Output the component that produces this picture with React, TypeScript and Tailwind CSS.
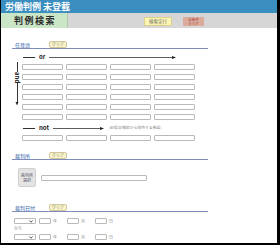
import React from "react";

const jp = "font-['Noto_Sans_CJK_JP','Noto_Sans',sans-serif]";

function Arrow({ width }: { width: number }) {
  return (
    <svg width={width + 3} height="5" viewBox={`0 0 ${width + 3} 5`} className="block">
      <line x1="0" y1="2.5" x2={width} y2="2.5" stroke="#333" strokeWidth="0.8" />
      <path d={`M${width - 1} 1 L${width + 3} 2.5 L${width - 1} 4 Z`} fill="#222" />
    </svg>
  );
}

function Box({ className = "" }: { className?: string }) {
  return <div className={`h-[6px] rounded-[1px] border border-[#b9b9b9] bg-white ${className}`} />;
}

function SectionHead({ title }: { title: string }) {
  return (
    <div className="flex h-[8px] w-[196px] items-center border-b-[1.5px] border-[#7e8cbc] pl-[3px]">
      <span className="w-[34px] text-[5px] leading-none text-[#2f5ea8]">{title}</span>
      <span className="rounded-[2px] border border-[#cfc79a] bg-[#f8f3cc] px-[2px] text-[4px] leading-[5px] text-[#8a845c]">
        クリア
      </span>
    </div>
  );
}

function InputRow() {
  return (
    <div className="flex gap-[3px]">
      <Box className="w-[41px]" />
      <Box className="w-[41px]" />
      <Box className="w-[41px]" />
      <Box className="w-[41px]" />
    </div>
  );
}

function DateRow() {
  return (
    <div className="flex items-center text-[4px] text-[#888]">
      <div className="ml-[2px] flex h-[6px] w-[22px] items-center justify-end rounded-[1px] border border-[#b9b9b9] bg-white pr-[2px]">
        <svg width="4" height="3" viewBox="0 0 4 3">
          <path d="M0.5 0.5 L2 2.3 L3.5 0.5" fill="none" stroke="#333" strokeWidth="0.8" />
        </svg>
      </div>
      <Box className="ml-[3px] w-[12px]" />
      <span className="ml-[2px] mr-[10px]">年</span>
      <Box className="w-[12px]" />
      <span className="ml-[2px] mr-[10px]">月</span>
      <Box className="w-[12px]" />
      <span className="ml-[2px]">日</span>
    </div>
  );
}

export default function App() {
  return (
    <div className={`h-[245px] w-[280px] overflow-hidden border-b-2 border-l border-r-[3px] border-black bg-white ${jp}`}>
      <div className="h-[13px] bg-[#3a8ec0] pl-[4px] text-[9px] font-bold leading-[13px] text-white">
        労働判例 未登載
      </div>
      <div className="flex h-[15px] bg-[#d6d6d6]">
        <div className="w-[67px] border-r border-[#b5c9b0] bg-[#cbe6c6] pl-[13px] text-[9px] font-bold leading-[15px] tracking-[1.5px] text-[#2b2b2b]">
          判例検索
        </div>
        <div className="ml-[76px] mt-[4px] h-[9px] w-[28px] rounded-[1px] border border-[#dcd08a] bg-[#fcf4b4] text-center text-[4.5px] leading-[7px] text-[#666]">
          検索実行
        </div>
        <div className="ml-[11px] mt-[4px] flex h-[9px] w-[21px] flex-col items-center justify-center rounded-[1px] bg-[#dbab9b] text-[3.5px] leading-[3.5px] text-[#a54040]">
          <span>全条件</span>
          <span>クリア</span>
        </div>
      </div>

      <div className="pl-[11px]">
        <div className="mt-[13px]">
          <SectionHead title="任意語" />
        </div>

        <div className="ml-[11px] mt-[5px] flex h-[6px] items-center">
          <div className="h-px w-[12px] bg-[#333]" />
          <span className="mx-[4px] text-[6px] font-bold leading-none text-[#222]">or</span>
          <Arrow width={124} />
        </div>

        <div className="mt-[2px] flex">
          <div className="flex w-[10px] flex-col items-center">
            <div className="h-[10px] w-px bg-[#333]" />
            <span className="py-[1px] text-[6px] font-bold leading-none text-[#222] [writing-mode:vertical-rl]">
              and
            </span>
            <div className="h-[19px] w-px bg-[#333]" />
            <svg width="4" height="4" viewBox="0 0 4 4" className="block">
              <path d="M0.5 0 L2 3.5 L3.5 0 Z" fill="#222" />
            </svg>
          </div>
          <div className="mt-[2px] flex flex-col gap-[4px]">
            <InputRow />
            <InputRow />
            <InputRow />
            <InputRow />
            <InputRow />
            <InputRow />
          </div>
        </div>

        <div className="ml-[11px] mt-[4px] flex h-[8px] items-center">
          <div className="h-px w-[12px] bg-[#333]" />
          <span className="mx-[4px] text-[6px] font-bold leading-none text-[#222]">not</span>
          <Arrow width={48} />
          <span className="ml-[5px] text-[3.8px] leading-none text-[#888]">(and/or検索から除外する単語)</span>
        </div>
        <div className="ml-[10px] mt-[3px]">
          <InputRow />
        </div>

        <div className="mt-[11px]">
          <SectionHead title="裁判所" />
        </div>
        <div className="ml-[6px] mt-[8px] flex items-center">
          <div className="flex h-[19px] w-[18px] flex-col items-center justify-center rounded-[2px] border border-[#cfcfcf] bg-[#e4e4e4] text-[4px] leading-[5px] text-[#556]">
            <span>裁判所</span>
            <span>選択</span>
          </div>
          <Box className="ml-[5px] h-[5px] w-[106px]" />
        </div>

        <div className="mt-[17px]">
          <SectionHead title="裁判日付" />
        </div>
        <div className="mt-[6px]">
          <DateRow />
        </div>
        <div className="ml-[2px] mt-[2px] text-[4px] leading-[5px] text-[#888]">から</div>
        <div className="mt-[3px]">
          <DateRow />
        </div>
      </div>
    </div>
  );
}
